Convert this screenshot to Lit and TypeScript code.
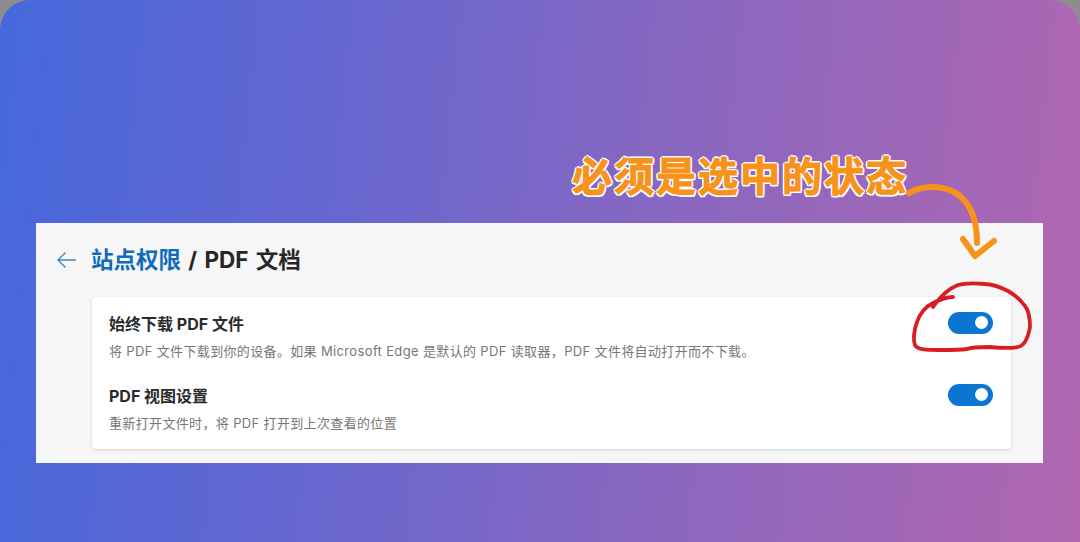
import { LitElement, html, css, svg } from "lit";
import { customElement } from "lit/decorators.js";

@customElement("app-toggle")
class AppToggle extends LitElement {
  static styles = css`
    :host { display: block; width: 45px; height: 22px; margin-top: -1px; border-radius: 11px; background: #0a76d2; position: relative; flex: none; }
    .knob { position: absolute; right: 5px; top: 4px; width: 13px; height: 13px; border-radius: 50%; background: #fff; }
  `;
  render() { return html`<div class="knob"></div>`; }
}

@customElement("app-root")
class AppRoot extends LitElement {
  static styles = css`
    :host { display: block; width: 1080px; height: 542px; background: #8d8d8d; overflow: hidden; font-family: "Inter", "Noto Sans CJK SC", sans-serif; }
    .hero {
      position: relative; box-sizing: border-box; width: 1080px; height: 542px;
      border-radius: 30px 30px 0 0;
      background: linear-gradient(96deg, #4668dc 0%, #6567d0 30%, #8a67c0 62%, #b167b0 100%);
      padding: 153px 37px 0 36px;
      display: flex; flex-direction: column;
    }
    .callout {
      height: 47px; margin-left: 536px; line-height: 47px;
      font-size: 40px; font-weight: 700; letter-spacing: 2px; white-space: nowrap;
      color: #f7931a; -webkit-text-stroke: 1px #f7931a;
      text-shadow: 2px 0 0 #fff, -2px 0 0 #fff, 0 2px 0 #fff, 0 -2px 0 #fff, 1.5px 1.5px 0 #fff, -1.5px 1.5px 0 #fff, 1.5px -1.5px 0 #fff, -1.5px -1.5px 0 #fff;
    }
    .panel { margin-top: 23px; height: 240px; background: #f6f6f6; box-sizing: border-box; padding: 21px 32px 0 20px; }
    .head { display: flex; align-items: center; gap: 14px; height: 32px; font-size: 22.5px; font-weight: 700; color: #262626; word-spacing: 2px; }
    .head svg { display: block; }
    .title { padding-bottom: 4px; }
    .crumb { color: #0f6cbd; }
    .card {
      margin: 21px 0 0 36px; height: 152px; box-sizing: border-box; background: #fff; border-radius: 4px;
      box-shadow: 0 1px 3px rgba(0,0,0,.16); padding: 16px 18px 0 17px; display: flex; flex-direction: column; gap: 26px;
    }
    .row { display: flex; justify-content: space-between; align-items: flex-start; height: 46px; }
    .label { font-size: 16px; font-weight: 700; color: #2b2b2b; line-height: 21px; margin-top: 1px; }
    .desc { font-size: 13px; color: #767676; line-height: 18px; margin-top: 7px; letter-spacing: .35px; }
    .overlay { position: absolute; left: 0; top: 0; pointer-events: none; }
  `;
  render() {
    return html`<div class="hero">
      <div class="callout">必须是选中的状态</div>
      <div class="panel">
        <div class="head">
          <svg width="21" height="18" viewBox="0 0 21 18" fill="none" stroke="#3f86c4" stroke-width="1.4"><path d="M20 9H2M9.5 1.5 2 9l7.5 7.5"/></svg>
          <div class="title"><span class="crumb">站点权限</span> / PDF 文档</div>
        </div>
        <div class="card">
          <div class="row">
            <div><div class="label">始终下载 PDF 文件</div><div class="desc">将 PDF 文件下载到你的设备。如果 Microsoft Edge 是默认的 PDF 读取器，PDF 文件将自动打开而不下载。</div></div>
            <app-toggle></app-toggle>
          </div>
          <div class="row">
            <div><div class="label">PDF 视图设置</div><div class="desc">重新打开文件时，将 PDF 打开到上次查看的位置</div></div>
            <app-toggle></app-toggle>
          </div>
        </div>
      </div>
      <svg class="overlay" width="1080" height="542" fill="none">
        ${svg`<path d="M909 193C916 189 924 187 932 187C945 187 956 191 964 200C973 210 977 224 977 243" stroke="#f7931a" stroke-width="6" stroke-linecap="round"/>
        <path d="M963 239L975 256L994 241" stroke="#f7931a" stroke-width="6" stroke-linecap="round" stroke-linejoin="round"/>
        <path d="M953 297C946 297 939 300 933 303C925 307 920 313 917 322C914 330 913 340 915 345C917 350 928 350 940 350C950 350 960 350 967 349C972 347 980 347 990 347C1000 348 1012 348 1018 347C1024 346 1028 338 1030 327C1030 318 1029 311 1025 306C1020 299 1015 295 1008 291C1000 287 993 284 985 284C975 283 965 283 958 285C950 288 942 294 933 307" stroke="#d81e22" stroke-width="3.8" stroke-linecap="round" stroke-linejoin="round"/>`}
      </svg>
    </div>`;
  }
}
